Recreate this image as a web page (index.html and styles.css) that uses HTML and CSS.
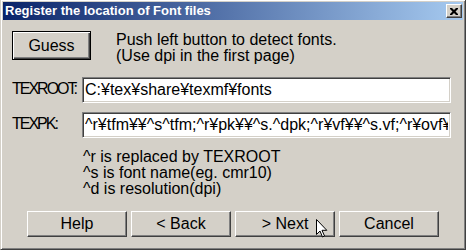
FILE: index.html
```html
<!DOCTYPE html>
<html lang="en">
<head>
    <meta charset="UTF-8">
    <title>Register the location of Font files</title>
    <link rel="stylesheet" href="styles.css">
</head>
<body>
    <div class="window">
        <div class="titlebar">
            <span class="title">Register the location of Font files</span>
            <button class="close">
                <svg width="8" height="7" viewBox="0 0 8 7">
                    <path d="M0 0h2l2 2 2-2h2v1l-2.5 2.5 2.5 2.5v1h-2l-2-2-2 2h-2v-1l2.5-2.5-2.5-2.5z" fill="#000"/>
                </svg>
            </button>
        </div>

        <div class="dialog">
            <div class="guess-row">
                <button class="btn default">Guess</button>
                <p class="note">Push left button to detect fonts.<br>(Use dpi in the first page)</p>
            </div>

            <div class="fields">
                <label for="texroot">TEXROOT:</label>
                <input id="texroot" class="field" type="text" value="C:¥tex¥share¥texmf¥fonts">
                <label for="texpk">TEXPK:</label>
                <input id="texpk" class="field" type="text" value="^r¥tfm¥¥^s^tfm;^r¥pk¥¥^s.^dpk;^r¥vf¥¥^s.vf;^r¥ovf¥¥^s.ovf">
            </div>

            <div class="hints">
                ^r is replaced by TEXROOT<br>
                ^s is font name(eg. cmr10)<br>
                ^d is resolution(dpi)
            </div>

            <div class="actions">
                <button class="btn">Help</button>
                <button class="btn">&lt; Back</button>
                <button class="btn">&gt; Next</button>
                <button class="btn">Cancel</button>
            </div>
        </div>

        <svg class="cursor" width="12" height="19" viewBox="0 0 12 19">
            <path d="M0.5 0.5 L0.5 15.5 L4 12 L6.5 18 L8.5 17 L6 11.3 L10.8 11.3 Z" fill="#fff" stroke="#000" stroke-width="1"/>
        </svg>
    </div>
</body>
</html>
```

FILE: styles.css
```css
body {
    margin: 0;
    padding: 0;
    background-color: #d4d0c8;
    font-family: 'Liberation Sans', Arial, sans-serif;
    font-size: 16px;
    color: #000000;
    overflow: hidden;
}
.window {
    position: relative;
    box-sizing: border-box;
    width: 466px;
    height: 251px;
    margin-top: -1px;
    background-color: #d4d0c8;
    border: 1px solid;
    border-color: #d4d0c8 #404040 #404040 #d4d0c8;
    box-shadow: inset 1px 1px #ffffff, inset -1px -1px #808080;
    padding: 2px;
}
.titlebar {
    display: flex;
    justify-content: space-between;
    align-items: center;
    height: 18px;
    padding: 0 1px 0 2px;
    background: linear-gradient(to right, #0a246a, #a6caf0);
}
.title {
    color: #ffffff;
    font-size: 13px;
    font-weight: bold;
    line-height: 18px;
    white-space: nowrap;
}
.close {
    display: flex;
    align-items: center;
    justify-content: center;
    box-sizing: border-box;
    width: 16px;
    height: 14px;
    padding: 0;
    background-color: #d4d0c8;
    border: 1px solid;
    border-color: #ffffff #404040 #404040 #ffffff;
    box-shadow: inset -1px -1px #808080;
}
.dialog {
    padding: 11px 12px 0 9px;
}
.guess-row {
    display: flex;
    align-items: flex-start;
    gap: 25px;
}
.btn {
    box-sizing: border-box;
    width: 100px;
    height: 26px;
    padding: 0;
    font-family: inherit;
    font-size: 16px;
    color: #000000;
    background-color: #d4d0c8;
    border: 1px solid;
    border-color: #ffffff #404040 #404040 #ffffff;
    box-shadow: inset -1px -1px #808080;
}
.btn.default {
    width: 79px;
    height: 29px;
    border: 1px solid #000000;
    box-shadow: inset 1px 1px #ffffff, inset -1px -1px #404040, inset -2px -2px #808080;
}
.note {
    margin: 1px 0 0;
    line-height: 16px;
    white-space: nowrap;
}
.fields {
    display: grid;
    grid-template-columns: 70px 1fr;
    align-items: center;
    row-gap: 9px;
    margin-top: 13px;
}
.fields label {
    line-height: 16px;
    letter-spacing: -2px;
    margin-top: -2px;
}
.field {
    box-sizing: border-box;
    width: 100%;
    height: 26px;
    padding: 0 2px;
    font-family: inherit;
    font-size: 16px;
    color: #000000;
    background-color: #ffffff;
    border: 1px solid;
    border-color: #808080 #ffffff #ffffff #808080;
    box-shadow: inset 1px 1px #404040, inset -1px -1px #d4d0c8;
    outline: none;
}
.hints {
    margin: 11px 0 0 71px;
    line-height: 16px;
}
.actions {
    display: flex;
    gap: 4px;
    margin: 14px 0 0 15px;
}
.cursor {
    position: absolute;
    left: 315px;
    top: 219px;
}
```
